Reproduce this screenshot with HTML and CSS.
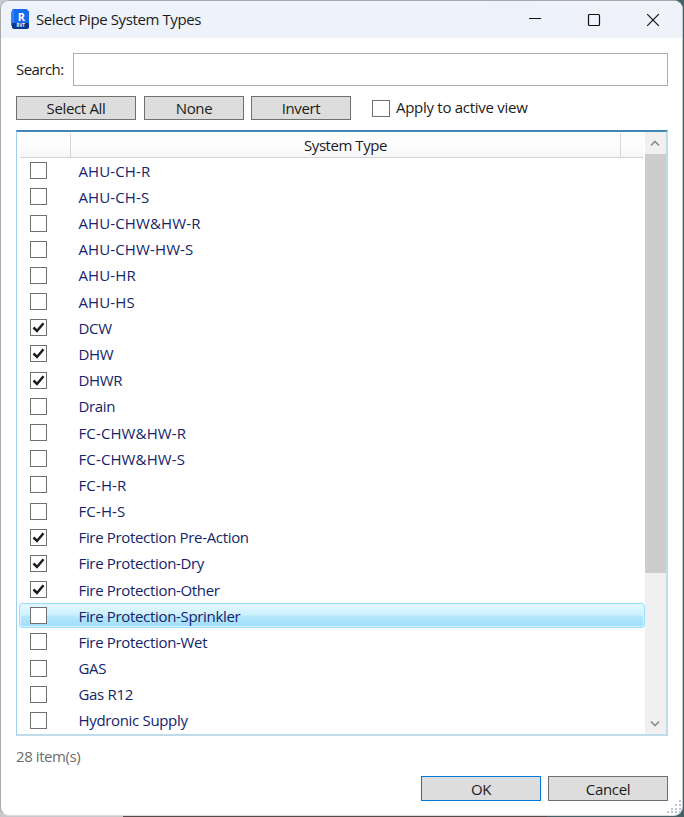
FILE: index.html
```html
<!DOCTYPE html>
<html lang="en">
<head>
<meta charset="utf-8">
<title>Select Pipe System Types</title>
<link rel="stylesheet" href="styles.css">
</head>
<body>
<div class="window">
  <header class="titlebar">
    <svg class="app-icon" width="19" height="21" viewBox="0 0 19 21">
      <path d="M2 0H15.500L18 2.500V18.500L16.500 20H2.500L1 18.500V1Z" fill="#176bed"/>
      <path d="M0 3L3 0V14L1 17H0Z" fill="#2e83f5"/>
      <path d="M1 14H18V18.500L16.500 20H2.500L1 18.500Z" fill="#08388c"/>
      <text class="icon-r" x="10.300" y="11.500" text-anchor="middle">R</text>
      <text class="icon-rvt" x="9.700" y="18.300" text-anchor="middle">RVT</text>
    </svg>
    <h1 class="title">Select Pipe System Types</h1>
    <div class="controls">
      <svg width="14" height="14" viewBox="0 0 14 14"><path d="M1 5.500H13"/></svg>
      <svg width="14" height="14" viewBox="0 0 14 14"><rect x="1.500" y="1.500" width="11" height="11" rx="1"/></svg>
      <svg width="14" height="14" viewBox="0 0 14 14"><path d="M1.200 1.200L12.800 12.800M12.800 1.200L1.200 12.800"/></svg>
    </div>
  </header>
  <main class="content">
    <div class="search"><label for="q">Search:</label><input id="q" type="text"></div>
    <div class="toolbar">
      <button class="btn wide">Select All</button>
      <button class="btn">None</button>
      <button class="btn">Invert</button>
      <span class="box"></span><span class="apply">Apply to active view</span>
    </div>
    <section class="list">
      <div class="table">
        <div class="head"><span class="h-check"></span><span class="h-name">System Type</span><span class="h-end"></span></div>
        <div class="rows" id="rows"></div>
      </div>
      <div class="scroll">
        <div class="arrow"><svg width="10" height="7" viewBox="0 0 10 7"><path d="M1 5.500L5 1.500L9 5.500"/></svg></div>
        <div class="thumb"></div>
        <div class="arrow down"><svg width="10" height="7" viewBox="0 0 10 7"><path d="M1 1.500L5 5.500L9 1.500"/></svg></div>
      </div>
    </section>
    <p class="count">28 item(s)</p>
    <footer class="actions"><button class="btn ok">OK</button><button class="btn cancel">Cancel</button></footer>
  </main>
  <svg class="grip" width="15" height="15" viewBox="0 0 15 15"><path d="M12 1h2v2h-2zM12 5h2v2h-2zM8 5h2v2h-2zM12 9h2v2h-2zM8 9h2v2h-2zM4 9h2v2h-2zM12 12h2v2h-2zM8 12h2v2h-2zM4 12h2v2h-2zM0 12h2v2h-2z"/></svg>
</div>
<script src="rows.js"></script>
</body>
</html>
```
FILE: styles.css
```css
* { box-sizing: border-box; }
body {
  margin: 0;
  height: 817px;
  overflow: hidden;
  background: linear-gradient(90deg, #c9c9cb 0 18%, #55494c 18% 80%, #476066 80%);
  font: 15px/20px "Open Sans", "Noto Sans", sans-serif;
  letter-spacing: -0.35px;
  color: #1b1b1b;
}
.window {
  position: relative;
  width: 683px;
  height: 816px;
  background: #fff;
  border: 1px solid #a9a9ad;
  border-right-color: #c3c8ca;
  border-bottom-color: #dcdcdc;
  border-radius: 9px;
  overflow: hidden;
}
.titlebar {
  display: flex;
  align-items: center;
  height: 37px;
  padding: 0 22px 0 10px;
  background: linear-gradient(90deg, #edf2fb 0 70%, #f0f2f9);
}
.app-icon { margin-top: -1px; }
.icon-r { font: bold 11px "Open Sans", sans-serif; fill: #fff; letter-spacing: 0; }
.icon-rvt { font: bold 4.5px "Open Sans", sans-serif; fill: #fff; letter-spacing: 0; }
.title { margin: -2px 0 0 6px; font-size: 15px; font-weight: 400; letter-spacing: -0.4px; }
.controls { display: flex; gap: 45px; margin-left: auto; }
.controls svg { fill: none; stroke: #111; stroke-width: 1.2; }
.content { padding: 15px 14px 0 15px; }
.search { display: flex; align-items: center; height: 33px; }
.search label { width: 57px; margin-top: -2px; letter-spacing: -0.55px; }
.search input { flex: 1; height: 33px; border: 1px solid #abadb3; padding: 0 6px; outline: none; }
.toolbar { display: flex; align-items: center; height: 24px; margin-top: 10px; }
.btn {
  width: 100px;
  height: 24px;
  margin: 0 7px 0 0;
  padding: 0;
  border: 1px solid #707070;
  background: #ddd;
  color: #1b1b1b;
  font: inherit;
  letter-spacing: inherit;
}
.wide { width: 120px; margin-right: 8px; }
.box {
  display: flex;
  flex: none;
  width: 18px;
  height: 17px;
  border: 1px solid #707070;
  background: #fff;
}
.toolbar .box { margin-left: 14px; }
.apply { margin: -2px 0 0 6px; letter-spacing: -0.28px; }
.list {
  display: flex;
  height: 606px;
  margin-top: 10px;
  border: 2px solid #c0dcea;
  border-top-color: #4285b7;
  border-left: 1px solid #9fcfe8;
  overflow: hidden;
}
.table { flex: 1; padding: 1px 0 0 2px; }
.head {
  display: flex;
  width: 623px;
  height: 25px;
  margin-left: 1px;
  text-align: center;
  line-height: 24px;
  letter-spacing: -0.45px;
  background: linear-gradient(#fff, #fdfdfe 45%, #f5f6f8);
  border-bottom: 1px solid #d5d5d5;
}
.h-check { width: 51px; border-right: 1px solid #d5d7da; }
.h-name { width: 550px; border-right: 1px solid #d5d7da; }
.row {
  display: flex;
  align-items: center;
  height: 26.18px;
  padding-left: 11px;
  color: #14246b;
}
.row .box { width: 17px; height: 17px; margin-top: -0.6px; }
.row .label { margin: -0.6px 0 0 31.5px; white-space: nowrap; letter-spacing: -0.33px; }
.row .caps { letter-spacing: 0.12px; }
.box svg { display: block; fill: none; stroke: #1c1c1c; stroke-width: 2.5; }
.selected { position: relative; }
.selected::before {
  content: "";
  position: absolute;
  inset: 0 0 1px 0;
  border: 1px solid #99defd;
  border-radius: 3px;
  box-shadow: inset 0 0 0 1px #dcf4ff;
  background: linear-gradient(#e5f8ff, #cdf1ff 48%, #b7e8fe 52%, #9edcfa);
}
.selected > * { position: relative; }
.scroll {
  display: flex;
  flex-direction: column;
  width: 21px;
  background: #f0f0f0;
}
.arrow { display: flex; flex: none; align-items: center; justify-content: center; height: 22px; padding-right: 1px; }
.arrow svg { fill: none; stroke: #8c8c8c; stroke-width: 1.6; }
.thumb { height: 419px; background: #cdcdcd; }
.down { margin-top: auto; }
.count { margin: 10px 0 0; color: #6d6d6d; letter-spacing: -0.42px; }
.actions { display: flex; justify-content: flex-end; margin-top: 10px; }
.actions .btn { width: 120px; height: 25px; }
.actions .ok { border-color: #0078d7; }
.actions .cancel { margin-right: 0; }
.grip { position: absolute; right: 0; bottom: 1px; fill: #bcc4d3; }
```
FILE: rows.js
```js
const items = [
  ["AHU-CH-R"], ["AHU-CH-S"], ["AHU-CHW&HW-R"], ["AHU-CHW-HW-S"], ["AHU-HR"], ["AHU-HS"],
  ["DCW", 1], ["DHW", 1], ["DHWR", 1], ["Drain"], ["FC-CHW&HW-R"], ["FC-CHW&HW-S"],
  ["FC-H-R"], ["FC-H-S"], ["Fire Protection Pre-Action", 1], ["Fire Protection-Dry", 1],
  ["Fire Protection-Other", 1], ["Fire Protection-Sprinkler", 0, 1], ["Fire Protection-Wet"],
  ["GAS"], ["Gas R12"], ["Hydronic Supply"]
];
const tick = '<svg width="15" height="15" viewBox="0 0 15 15"><path d="M2.500 7.500L6 11L12.500 3.200"/></svg>';
const rows = document.getElementById("rows");
for (const [name, checked, selected] of items) {
  const row = document.createElement("div");
  row.className = selected ? "row selected" : "row";
  row.innerHTML = `<span class="box">${checked ? tick : ""}</span><span class="label"></span>`;
  row.lastChild.textContent = name;
  if (name.length > 4 && name === name.toUpperCase()) row.lastChild.classList.add("caps");
  rows.append(row);
}
```
